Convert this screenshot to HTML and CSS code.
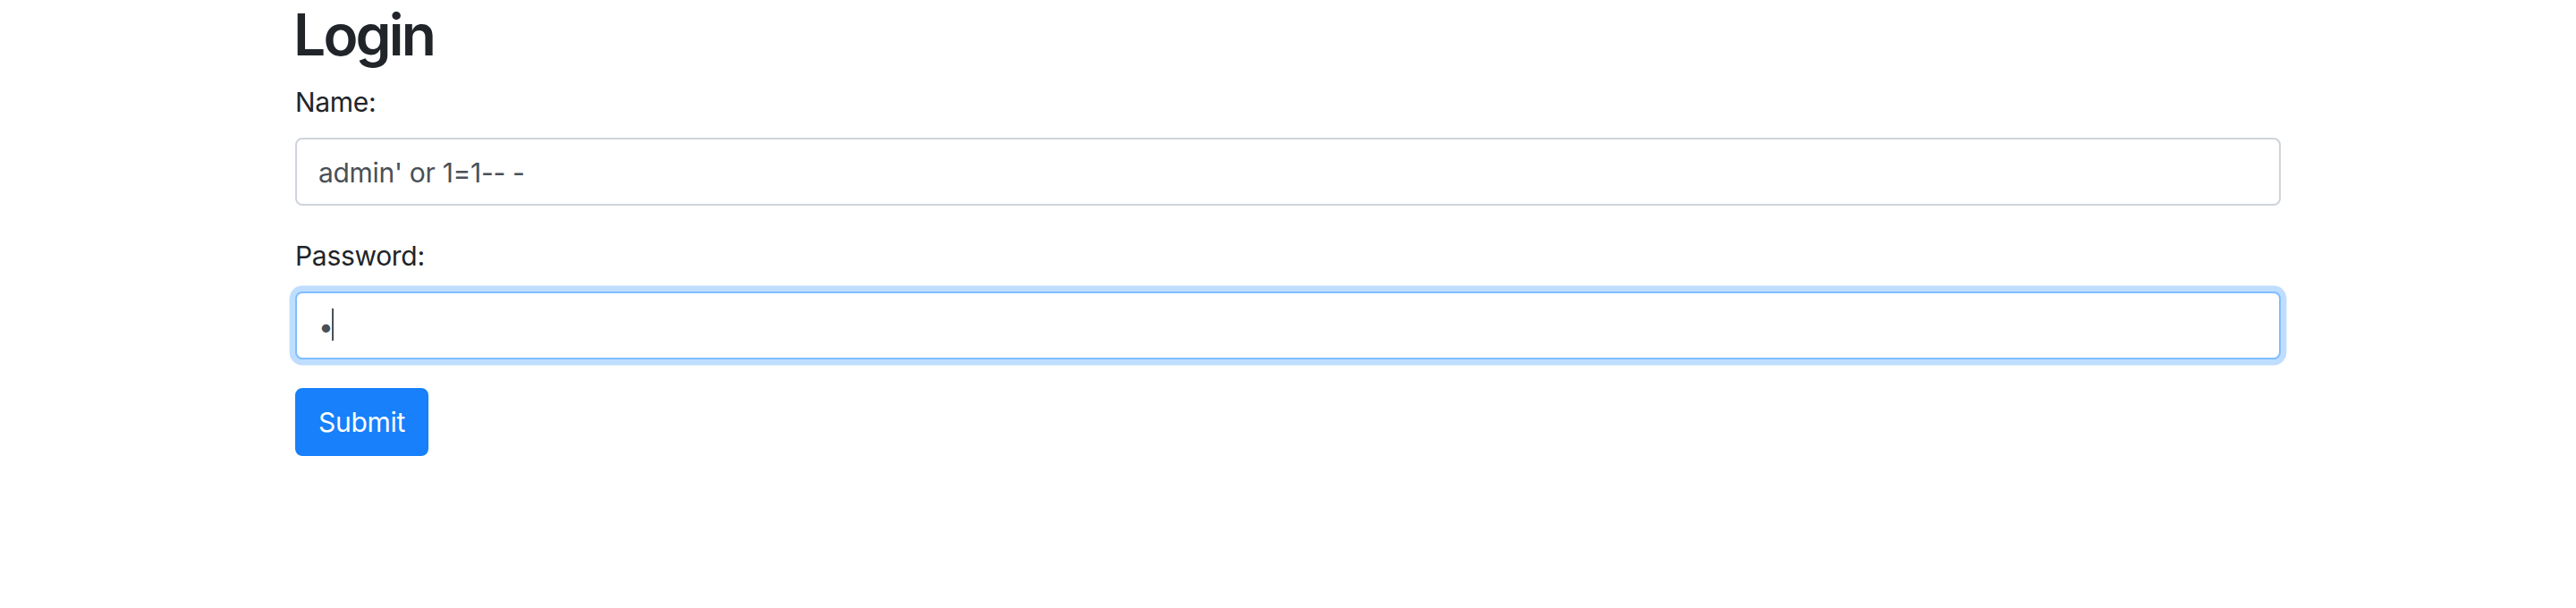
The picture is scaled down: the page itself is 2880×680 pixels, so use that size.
FILE: index.html
```html
<!DOCTYPE html>
<html lang="en">
<head>
<meta charset="utf-8">
<title>Login</title>
<link rel="stylesheet" href="styles.css">
</head>
<body>
<div class="container">
  <h1 class="title">Login</h1>
  <form class="login-form">
    <div class="form-group">
      <label class="form-label" for="name">Name:</label>
      <input class="form-control" id="name" type="text" value="admin' or 1=1-- -">
    </div>
    <div class="form-group">
      <label class="form-label" for="pwd">Password:</label>
      <div class="field-wrap">
        <input class="form-control is-focused" id="pwd" type="password" value="a">
        <span class="caret"></span>
      </div>
    </div>
    <button class="btn-primary" type="button">Submit</button>
  </form>
</div>
</body>
</html>
```

FILE: styles.css
```css
* { box-sizing: border-box; }
html, body { margin: 0; padding: 0; background: #fff; }
body {
  font-family: Inter, "Noto Sans", "Liberation Sans", sans-serif;
  color: #212529;
  font-size: 30px;
  line-height: 48px;
  letter-spacing: -0.3px;
}
.container {
  width: 2280px;
  margin: 0 auto;
  padding: 0 30px;
}
.title {
  font-size: 64px;
  font-weight: 600;
  line-height: 77px;
  letter-spacing: -2.8px;
  margin: 0 0 13px -2px;
}
.login-form { margin: 0; }
.form-group { margin-bottom: 32px; }
.form-label {
  display: block;
  margin-bottom: 16px;
  font-size: 30px;
  line-height: 48px;
}
.field-wrap { position: relative; }
.form-control {
  display: block;
  width: 100%;
  height: 76px;
  padding: 13px 24px 11px;
  font-family: inherit;
  font-size: 30px;
  line-height: 48px;
  letter-spacing: -0.3px;
  color: #495057;
  background: #fff;
  border: 2px solid #ced4da;
  border-radius: 8px;
  outline: none;
  caret-color: transparent;
}
.form-control.is-focused {
  border-color: #80bdff;
  box-shadow: 0 0 0 6.4px rgba(0, 123, 255, 0.25);
}
.caret {
  position: absolute;
  left: 41px;
  top: 19px;
  width: 2px;
  height: 36px;
  background: #495057;
}
.btn-primary {
  display: inline-block;
  height: 76px;
  padding: 12px 24px;
  font-family: inherit;
  font-size: 30px;
  line-height: 48px;
  letter-spacing: -0.3px;
  color: #fff;
  background: #1780fa;
  border: 2px solid #1780fa;
  border-radius: 8px;
}
```
